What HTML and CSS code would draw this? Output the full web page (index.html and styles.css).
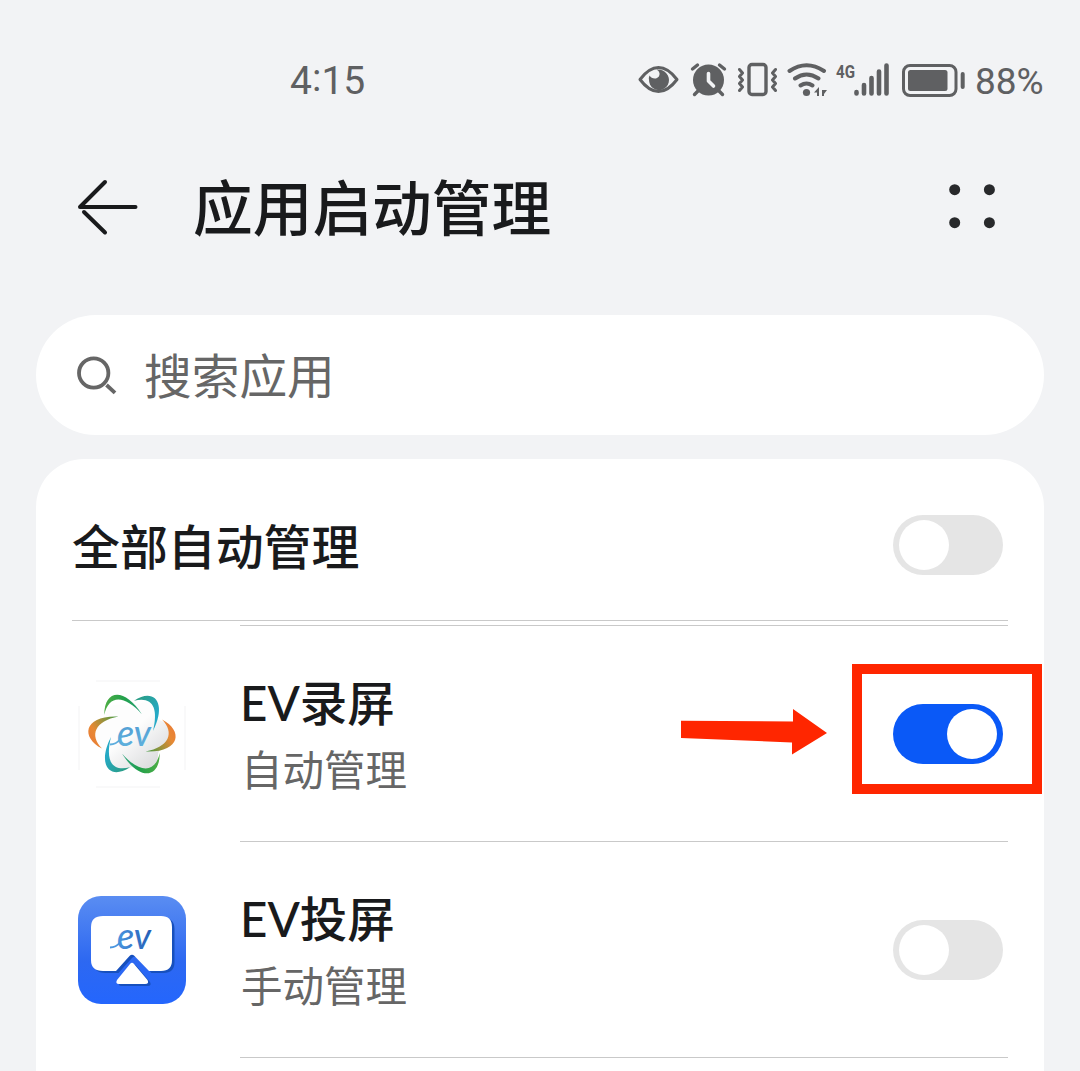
FILE: index.html
```html
<!DOCTYPE html>
<html lang="zh-CN">
<head>
<meta charset="utf-8">
<title>应用启动管理</title>
<link rel="stylesheet" href="styles.css">
</head>
<body>
<div class="screen">
  <div class="status">
    <span class="time">4<span class="colon">:</span>15</span>
    <svg class="status-icons" width="330" height="40" viewBox="636 60 330 40" fill="none" stroke="#5f6062" stroke-linecap="round" stroke-linejoin="round">
      <path d="M640 79.500Q649 67.500 658.500 67.500T677 79.500Q668 91.500 658.500 91.500T640 79.500Z" stroke-width="3"/>
      <path d="M656.500 69.500Q663 69 666.500 73.500A10 10 0 1 1 649 80Q648.500 77.500 649.500 75.500Q651.500 79 656 78.500Q660 77 659.500 73Q659 70.500 656.500 69.500Z" fill="#5f6062" stroke="none"/>
      <circle cx="708.500" cy="80" r="15.500" fill="#5f6062" stroke="none"/>
      <path d="M692.500 69l5-4M724.500 69l-5-4M698 91l-3.500 3.500M719 91l3.500 3.500" stroke-width="3.400"/>
      <path d="M708.500 73.500V81l5 5" stroke="#f2f3f5" stroke-width="3.600"/>
      <rect x="749" y="64.500" width="17" height="30" rx="3" stroke-width="3.400"/>
      <path d="M739.500 69.500l3 3.500-3 3.500 3 3.500-3 3.500 3 3.500-3 3.500M775.500 69.500l-3 3.500 3 3.500-3 3.500 3 3.500-3 3.500 3 3.500" stroke-width="3"/>
      <path d="M789.500 71q17-11.500 34.500 0M795 78.500q11.500-8 23.500 0M800.500 85.500q6-4 12 0" stroke-width="4"/>
      <circle cx="806.500" cy="92.500" r="3.600" fill="#5f6062" stroke="none"/>
      <path d="M819 87v9h-2v-3.500h-3zM822 96v-6h5l-3 4v2z" fill="#5f6062" stroke="none"/>
      <text class="network" x="836" y="77.700" textLength="19" lengthAdjust="spacingAndGlyphs">4G</text>
      <path d="M856.500 92v1.500M864 85v8.500M871.500 78v15.500M879 71.500v22M886.500 65.500v28" stroke-width="4.600"/>
      <rect x="903.500" y="65.500" width="52.500" height="30" rx="6.500" stroke-width="3"/>
      <rect x="908" y="70" width="39.500" height="21" rx="2.500" fill="#5f6062" stroke="none"/>
      <path d="M962.700 74v13" stroke-width="4"/>
    </svg>
    <span class="percent">88%</span>
  </div>

  <header class="header">
    <svg class="back" width="64" height="60" viewBox="76 178 64 60" fill="none" stroke="#191a1c" stroke-width="4" stroke-linecap="round" stroke-linejoin="round">
      <path d="M135.500 207H80L105 182M84 212l21 20.500"/>
    </svg>
    <h1 class="title">应用启动管理</h1>
    <svg class="more" width="52" height="48" viewBox="0 0 52 48" fill="#28292b">
      <circle cx="6.700" cy="5.700" r="5.500"/><circle cx="41.400" cy="5.700" r="5.500"/>
      <circle cx="6.700" cy="38.700" r="5.500"/><circle cx="41.400" cy="38.700" r="5.500"/>
    </svg>
  </header>

  <div class="search">
    <svg width="42" height="42" viewBox="76 354 42 42" fill="none" stroke="#666" stroke-width="3.800">
      <circle cx="93.700" cy="373" r="14.700"/><path d="M106.500 385l8.500 7.800"/>
    </svg>
    <span class="placeholder">搜索应用</span>
  </div>

  <main class="card">
    <div class="all-row">
      <span class="all-label">全部自动管理</span>
      <span class="toggle"></span>
    </div>
    <div class="app-row">
      <svg class="app-icon" width="108" height="108" viewBox="0 0 108 108">
        <defs>
          <linearGradient id="plate" x1="0" y1="0" x2="1" y2="1"><stop offset=".45" stop-color="#fdfdfd"/><stop offset="1" stop-color="#cfd0d2"/></linearGradient>
          <linearGradient id="green" x1="0" y1="0" x2="1" y2="0"><stop offset="0" stop-color="#4fae45"/><stop offset=".55" stop-color="#21a04c"/><stop offset="1" stop-color="#2ba37f"/></linearGradient>
          <linearGradient id="teal" x1="0" y1="0" x2="1" y2="1"><stop offset="0" stop-color="#2c9b79"/><stop offset=".7" stop-color="#25a9c5"/></linearGradient>
          <linearGradient id="orange" x1="1" y1="0" x2="0" y2=".7"><stop offset="0" stop-color="#3f9b43"/><stop offset=".75" stop-color="#e88934"/><stop offset="1" stop-color="#e97d36"/></linearGradient>
          <linearGradient id="word" x1="0" y1="0" x2="0" y2="1"><stop offset="0" stop-color="#4c94cf"/><stop offset="1" stop-color="#62b5df"/></linearGradient>
        </defs>
        <path d="M18 1h64M18 107h64M1 26v64M107 26v64" stroke="#f3f3f4" fill="none"/>
        <path d="M28 36Q30 18 54 28Q77 12 79 39Q102 48 90 60Q78 68 80 82Q77 96 54 87Q29 96 29 75Q15 62 16 48Q20 38 28 36Z" fill="url(#plate)"/>
        <path id="petal-green" d="M26.300 35C26 9 47 7 64 34.500C48 16 31 13 26.300 35Z" fill="url(#green)"/>
        <path id="petal-teal" d="M56 20.700C77 7 89 24 75 51C81 27 74 16 56 20.700Z" fill="url(#teal)"/>
        <path id="petal-orange" d="M40.500 36.500C6 35 2 57 24 68.500C11 55 17 41 40.500 36.500Z" fill="url(#orange)"/>
        <use href="#petal-green" transform="rotate(180 54 54)"/>
        <use href="#petal-teal" transform="rotate(180 54 54)"/>
        <use href="#petal-orange" transform="rotate(180 54 54)"/>
        <path d="M32 64.500q6 0 10-5" fill="none" stroke="#5eaede" stroke-width="2"/>
        <text class="wordmark" x="39" y="65.500" textLength="34" lengthAdjust="spacingAndGlyphs" fill="url(#word)">ev</text>
      </svg>
      <div class="app-body">
        <div class="app-text"><div class="app-name">EV录屏</div><div class="app-mode">自动管理</div></div>
        <div class="highlight">
          <svg class="arrow" width="148" height="48" viewBox="680 708 148 48"><path d="M681 720.700L793 721.500V709L827 733L792 754.500V742.500L681 738Z" fill="#ff2600"/></svg>
          <span class="toggle toggle-on"></span>
        </div>
      </div>
    </div>
    <div class="app-row">
      <svg class="app-icon" width="108" height="108" viewBox="0 0 108 108">
        <defs>
          <linearGradient id="blue" x1="0" y1="0" x2="0" y2="1"><stop offset="0" stop-color="#5a8df2"/><stop offset=".6" stop-color="#2d68f1"/><stop offset="1" stop-color="#2466fd"/></linearGradient>
          <linearGradient id="word-blue" x1="0" y1="0" x2="1" y2="0"><stop offset="0" stop-color="#4a95df"/><stop offset="1" stop-color="#245db5"/></linearGradient>
          <path id="cast" d="M25 20H83Q94 20 94 31V64Q94 75 83 75H71L56.500 60Q54 57.500 51.500 60L38 75H25Q13 75 13 64V31Q13 20 25 20ZM52 68Q54 65.500 56 68L69.500 84Q71.500 88 67 88H41Q37 88 39 84Z"/>
        </defs>
        <rect width="108" height="108" rx="23" fill="url(#blue)"/>
        <use href="#cast" fill="#1750bd" transform="translate(2.500 2)"/>
        <use href="#cast" fill="#fff"/>
        <path d="M32 51.500q6 0 10-5" fill="none" stroke="#4a95df" stroke-width="2"/>
        <text class="wordmark" x="39" y="52.500" textLength="34" lengthAdjust="spacingAndGlyphs" fill="url(#word-blue)">ev</text>
      </svg>
      <div class="app-body">
        <div class="app-text"><div class="app-name">EV投屏</div><div class="app-mode">手动管理</div></div>
        <span class="toggle"></span>
      </div>
    </div>
  </main>
</div>
</body>
</html>
```

FILE: styles.css
```css
* { box-sizing: border-box; }

body {
  margin: 0;
  overflow: hidden;
  background: #f2f3f5;
  color: #191a1c;
  font-family: "Noto Sans CJK SC", "Noto Sans", sans-serif;
}

svg { display: block; flex: none; }

.screen {
  height: 1071px;
  padding: 0 36px;
  overflow: hidden;
}

.status {
  display: flex;
  align-items: center;
  height: 110px;
  padding: 50px 0 0 254px;
  color: #5f6062;
  font-family: Roboto, "Noto Sans", sans-serif;
  font-size: 37px;
  line-height: 62px;
  white-space: nowrap;
}

.time {
  flex: none;
  width: 346px;
  padding-top: 2px;
  font-size: 39px;
}

.colon {
  position: relative;
  top: -3px;
}

.percent {
  margin-left: 9px;
  padding-top: 3px;
}

.network {
  fill: #5f6062;
  stroke: none;
  font-family: Roboto, sans-serif;
  font-size: 19px;
  font-weight: 700;
}

.header {
  display: flex;
  align-items: center;
  height: 196px;
  padding: 0 44px 0 40px;
}

.title {
  flex: 1;
  margin: 0 0 0 53px;
  padding-bottom: 7px;
  font-size: 59.700px;
  font-weight: 500;
  line-height: 88px;
}

.search {
  display: flex;
  align-items: center;
  height: 120px;
  margin-top: 9px;
  padding-left: 40px;
  border-radius: 60px;
  background: #fff;
}

.placeholder {
  margin-left: 26px;
  padding-bottom: 3px;
  color: #666;
  font-size: 47.700px;
  line-height: 70px;
}

.card {
  height: 640px;
  margin-top: 24px;
  padding: 0 36px;
  border-radius: 48px 48px 0 0;
  background: #fff;
}

.all-row {
  display: flex;
  align-items: center;
  justify-content: space-between;
  height: 162px;
  padding: 10px 5px 0 0;
  border-bottom: 1px solid #c9c9c9;
}

.all-label {
  padding-bottom: 2px;
  font-size: 47.900px;
  font-weight: 500;
  line-height: 70px;
}

.toggle {
  display: flex;
  flex: none;
  align-items: center;
  width: 110px;
  height: 60px;
  padding: 5px 6px;
  border-radius: 30px;
  background: #e5e5e5;
}

.toggle::before {
  width: 50px;
  height: 50px;
  border-radius: 50%;
  background: #fff;
  content: "";
}

.toggle-on {
  justify-content: flex-end;
  background: #0a59f7;
}

.app-row {
  display: flex;
  align-items: center;
  height: 216px;
  padding-left: 6px;
}

.all-row + .app-row .app-body {
  height: 217px;
  border-top: 1px solid #c9c9c9;
}

.all-row + .app-row {
  height: 217px;
  margin-top: 4px;
}

.app-body {
  display: flex;
  flex: 1;
  align-items: center;
  justify-content: space-between;
  height: 216px;
  margin-left: 54px;
  padding-right: 5px;
  border-bottom: 1px solid #c9c9c9;
}

.app-name {
  height: 68px;
  font-family: Lato, "Noto Sans CJK SC", sans-serif;
  font-size: 47.500px;
  font-weight: 500;
  line-height: 70px;
}

.app-mode {
  padding-left: 1px;
  color: #666;
  font-size: 41.500px;
  line-height: 64px;
}

.highlight {
  position: relative;
  display: flex;
  align-items: center;
  justify-content: center;
}

.highlight::after {
  position: absolute;
  inset: -40px -39px -30px -41px;
  border: 10px solid #ff2600;
  content: "";
}

.arrow {
  position: absolute;
  top: 4px;
  right: 175px;
}

.wordmark {
  font-family: Lato, sans-serif;
  font-size: 37px;
  font-style: italic;
  font-weight: 500;
}
```
